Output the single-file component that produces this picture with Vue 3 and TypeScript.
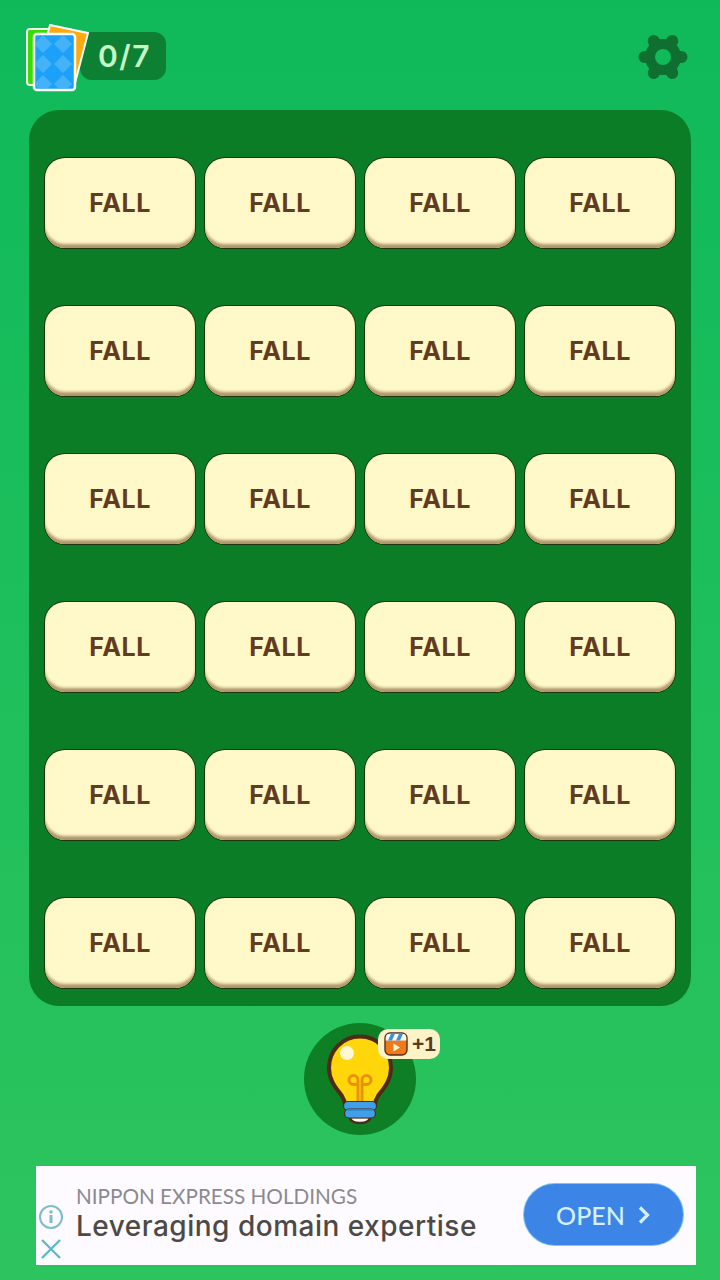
<template>
  <div class="screen">
    <header class="topbar">
      <div class="progress">
        <svg class="deck" width="66" height="68" viewBox="0 0 66 68">
          <defs>
            <pattern id="argyle" width="20" height="20" patternUnits="userSpaceOnUse" x="7" y="10">
              <path d="M10 1 L19 10 L10 19 L1 10 Z" fill="#6cc4f7" opacity="0.5" />
            </pattern>
          </defs>
          <rect x="1" y="5" width="44" height="56" rx="3" fill="#35dd00" stroke="#f4fff0" stroke-width="2" />
          <polygon points="24,1 62,9 49,59 11,51" fill="#ffa90e" stroke="#fff" stroke-width="2" stroke-linejoin="round" />
          <rect x="8" y="10" width="41" height="56" rx="3" fill="#1da0f8" stroke="#fff" stroke-width="2.5" />
          <rect x="9.5" y="11.5" width="38" height="53" rx="2" fill="url(#argyle)" />
        </svg>
        <div class="count">0/7</div>
      </div>
      <svg class="gear" width="50" height="50" viewBox="-25 -25 50 50">
        <circle r="13" fill="none" stroke="#0f6f31" stroke-width="10" />
        <line
          v-for="angle in gearTeeth"
          :key="angle"
          x1="15"
          x2="18.5"
          y1="0"
          y2="0"
          stroke="#0f6f31"
          stroke-width="12"
          stroke-linecap="round"
          :transform="`rotate(${angle})`"
        />
      </svg>
    </header>

    <main class="board">
      <div v-for="(word, i) in tiles" :key="i" class="tile">{{ word }}</div>
    </main>

    <div class="hint">
      <button class="bulb">
        <svg width="112" height="112" viewBox="0 0 112 112">
          <path d="M46 94 L66 94 Q66 100 56 100 Q46 100 46 94 Z" fill="#fff" stroke="#4f2a17" stroke-width="2.5" />
          <path
            d="M56 13.5 C38 13.5 25 28 25 45 C25 58 33 66 38 73 C40 76 41 79 41 82 L71 82 C71 79 72 76 74 73 C79 66 87 58 87 45 C87 28 74 13.5 56 13.5 Z"
            fill="#ffd60a"
            stroke="#4f2a17"
            stroke-width="4"
          />
          <circle cx="43" cy="30" r="7" fill="#fff7d6" />
          <path
            d="M54 79 V57 A4.5 4.5 0 1 0 49.5 61.5 H54 M58 79 V57 A4.5 4.5 0 1 1 62.5 61.5 H58"
            fill="none"
            stroke="#e8930c"
            stroke-width="3"
            stroke-linecap="round"
          />
          <rect x="39.5" y="78.5" width="33" height="9" rx="4.5" fill="#3f9fe8" stroke="#4f2a17" stroke-width="1.2" />
          <rect x="40.5" y="86" width="31" height="9" rx="4.5" fill="#3f9fe8" stroke="#4f2a17" stroke-width="1.2" />
          <line x1="43" x2="69" y1="86.8" y2="86.8" stroke="#2a80d2" stroke-width="1.6" />
        </svg>
        <span class="reward">
          <svg width="24" height="24" viewBox="0 0 24 24">
            <rect x="1" y="1" width="22" height="22" rx="5" fill="#ee7a1c" stroke="#5c2e16" stroke-width="1.4" />
            <path d="M1.7 8.5 L1.7 6 Q1.7 1.7 6 1.7 L18 1.7 Q22.3 1.7 22.3 6 L22.3 8.5 Z" fill="#fff" />
            <path d="M4 8.5 L7 1.7 L11 1.7 L8 8.5 Z M12 8.5 L15 1.7 L19 1.7 L16 8.5 Z" fill="#3b8fe0" />
            <path d="M9.5 11.5 L16 15.5 L9.5 19.5 Z" fill="#fff3d2" />
          </svg>
          <span>+1</span>
        </span>
      </button>
    </div>

    <footer class="ad">
      <div class="ad-controls">
        <svg width="26" height="26" viewBox="0 0 26 26">
          <circle cx="13" cy="13" r="11" fill="none" stroke="#7dbccb" stroke-width="2" />
          <circle cx="13" cy="8" r="1.7" fill="#7dbccb" />
          <rect x="11.5" y="11" width="3" height="8" fill="#7dbccb" />
        </svg>
        <svg width="24" height="24" viewBox="0 0 24 24">
          <path d="M3 3 L21 21 M21 3 L3 21" stroke="#5cbacb" stroke-width="2.4" fill="none" />
        </svg>
      </div>
      <div class="ad-copy">
        <div class="advertiser">NIPPON EXPRESS HOLDINGS</div>
        <div class="headline">Leveraging domain expertise</div>
      </div>
      <div class="open">
        <span>OPEN</span>
        <svg width="14" height="20" viewBox="0 0 14 20">
          <path d="M3 2.5 L10.5 10 L3 17.5" fill="none" stroke="#d4f1fb" stroke-width="3.2" />
        </svg>
      </div>
    </footer>
  </div>
</template>

<script setup lang="ts">
// six rows of four face-down word tiles
const tiles: string[] = Array.from({ length: 24 }, () => "FALL");
const gearTeeth: number[] = [0, 60, 120, 180, 240, 300];
</script>

<style>
html,
body {
  margin: 0;
  background: #1fbd5b;
}
</style>

<style scoped>
.screen {
  width: 720px;
  height: 1280px;
  overflow: hidden;
  background: linear-gradient(180deg, #0fb95a 0%, #2dc45e 100%);
  font-family: Inter, "Liberation Sans", sans-serif;
}

.topbar {
  height: 110px;
  box-sizing: border-box;
  padding: 24px 32px 0 26px;
  display: flex;
  align-items: flex-start;
  justify-content: space-between;
}

.progress {
  display: flex;
  align-items: flex-start;
}

.deck {
  position: relative;
  z-index: 1;
  display: block;
}

.count {
  margin: 8px 0 0 -12px;
  width: 86px;
  height: 48px;
  box-sizing: border-box;
  padding-left: 18px;
  border-radius: 12px;
  background: #0d8033;
  color: #c4f5c6;
  font: 600 30px/48px Inter, sans-serif;
  letter-spacing: 1.5px;
}

.gear {
  margin-top: 8px;
}

.board {
  width: 662px;
  height: 896px;
  box-sizing: border-box;
  margin-left: 29px;
  padding: 48px 16px 18px;
  border-radius: 30px;
  background: #0c7d27;
  display: grid;
  grid-template-columns: repeat(4, 150px);
  grid-auto-rows: 90px;
  gap: 58px 10px;
}

.tile {
  border-radius: 20px;
  background: #fff8c8;
  box-shadow: 0 0 0 1px #1c3512, inset 0 -5px 3px -1px #b0966a;
  display: flex;
  align-items: center;
  justify-content: center;
  color: #613c20;
  font-size: 25px;
  font-weight: 700;
  letter-spacing: 0.6px;
}

.hint {
  margin-top: 17px;
  display: flex;
  justify-content: center;
}

.bulb {
  position: relative;
  width: 112px;
  height: 112px;
  padding: 0;
  border: 0;
  border-radius: 50%;
  background: #0e7f24;
}

.bulb > svg {
  display: block;
}

.reward {
  position: absolute;
  left: 74px;
  top: 6px;
  width: 62px;
  height: 30px;
  box-sizing: border-box;
  padding-left: 6px;
  border-radius: 10px;
  background: #fdf3c8;
  display: flex;
  align-items: center;
  gap: 4px;
  color: #5a3a20;
  font-size: 21px;
  font-weight: 700;
}

.ad {
  margin: 31px 0 0 36px;
  width: 660px;
  height: 99px;
  background: #fdfbff;
  display: flex;
  align-items: center;
}

.ad-controls {
  width: 30px;
  height: 99px;
  box-sizing: border-box;
  padding-top: 38px;
  display: flex;
  flex-direction: column;
  align-items: center;
  gap: 7px;
  flex-shrink: 0;
}

.ad-copy {
  margin: -6px 0 0 10px;
  flex: 1;
}

.advertiser {
  color: #8c8a8e;
  font: 400 20.7px/26px Lato, sans-serif;
}

.headline {
  color: #4d4a45;
  font-size: 28px;
  font-weight: 500;
  line-height: 34px;
  letter-spacing: 0.5px;
  white-space: nowrap;
}

.open {
  margin: -2px 13px 0 0;
  width: 159px;
  height: 61px;
  border-radius: 31px;
  background: #3c85e6;
  box-shadow: 0 0 0 1px #7fc6ee;
  display: flex;
  align-items: center;
  justify-content: center;
  gap: 12px;
  color: #d4f1fb;
  font: 500 25px Lato, sans-serif;
}
</style>
